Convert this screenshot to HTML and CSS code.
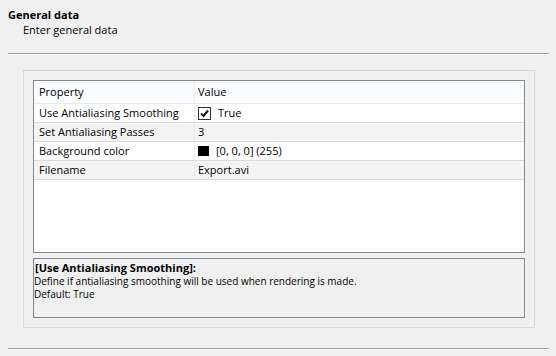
FILE: index.html
```html
<!DOCTYPE html>
<html lang="en">
<head>
  <meta charset="UTF-8" />
  <title>General data</title>
  <link rel="stylesheet" href="styles.css">
</head>
<body>

  <div class="header">
    <div class="title">General data</div>
    <div class="subtitle">Enter general data</div>
  </div>
  <div class="separator"></div>

  <div class="panel">
    <div class="grid">
      <div class="row head">
        <div class="cell name">Property</div>
        <div class="cell value">Value</div>
      </div>
      <div class="row">
        <div class="cell name">Use Antialiasing Smoothing</div>
        <div class="cell value">
          <span class="check">
            <svg width="11" height="11" viewBox="0 0 11 11"><path d="M2 5.5 L4.5 8 L9 2.5" fill="none" stroke="#111" stroke-width="2"/></svg>
          </span>True
        </div>
      </div>
      <div class="row alt">
        <div class="cell name">Set Antialiasing Passes</div>
        <div class="cell value">3</div>
      </div>
      <div class="row">
        <div class="cell name">Background color</div>
        <div class="cell value"><span class="swatch"></span>[0, 0, 0] (255)</div>
      </div>
      <div class="row alt">
        <div class="cell name">Filename</div>
        <div class="cell value">Export.avi</div>
      </div>
    </div>

    <div class="desc">
      <div class="desc-title">[Use Antialiasing Smoothing]:</div>
      <div>Define if antialiasing smoothing will be used when rendering is made.</div>
      <div>Default: True</div>
    </div>
  </div>

  <div class="separator bottom"></div>

</body>
</html>
```

FILE: styles.css
```css
body, html {
  margin: 0;
  padding: 0;
  background: #f0f0f0;
  font-family: 'Open Sans', 'Noto Sans', sans-serif;
  font-size: 11px;
  color: #000;
}

/* Header */
.header {
  padding: 8px 8px 0;
  height: 53px;
  box-sizing: border-box;
}
.title {
  font-weight: 700;
  line-height: 14px;
}
.subtitle {
  padding-left: 15px;
  line-height: 15px;
}

.separator {
  margin: 0 7px 0 8px;
  height: 1px;
  background: #a0a0a0;
  border-bottom: 1px solid #fff;
}
.separator.bottom {
  margin-top: 20px;
}

/* Panel with grid */
.panel {
  margin: 15px 21px 0 23px;
  border: 1px solid #dadada;
  padding: 9px;
}

.grid {
  background: #fff;
  border: 1px solid #828790;
  height: 171px;
}
.row {
  display: flex;
  height: 18px;
  border-bottom: 1px solid #dadada;
  line-height: 18px;
}
.row.alt {
  background: #f4f4f4;
}
.row.head {
  height: 22px;
  line-height: 22px;
  background: #fafbfc;
  border-bottom-color: #e8ecf3;
}
.cell.name {
  width: 155px;
  padding-left: 5px;
  border-right: 1px solid #ececec;
}
.cell.value {
  flex: 1;
  padding-left: 3px;
  display: flex;
  align-items: center;
}

.check {
  width: 11px;
  height: 11px;
  border: 1px solid #333;
  background: #fff;
  margin-right: 7px;
  display: flex;
}
.swatch {
  width: 11px;
  height: 10px;
  background: #000;
  margin-right: 7px;
}

.desc {
  margin-top: 5px;
  border: 1px solid #828790;
  height: 60px;
  box-sizing: border-box;
  padding-top: 1px;
  font-size: 10px;
  line-height: 13px;
}
.desc-title {
  font-size: 11px;
  font-weight: 700;
  line-height: 15px;
  padding-left: 1px;
}
```
